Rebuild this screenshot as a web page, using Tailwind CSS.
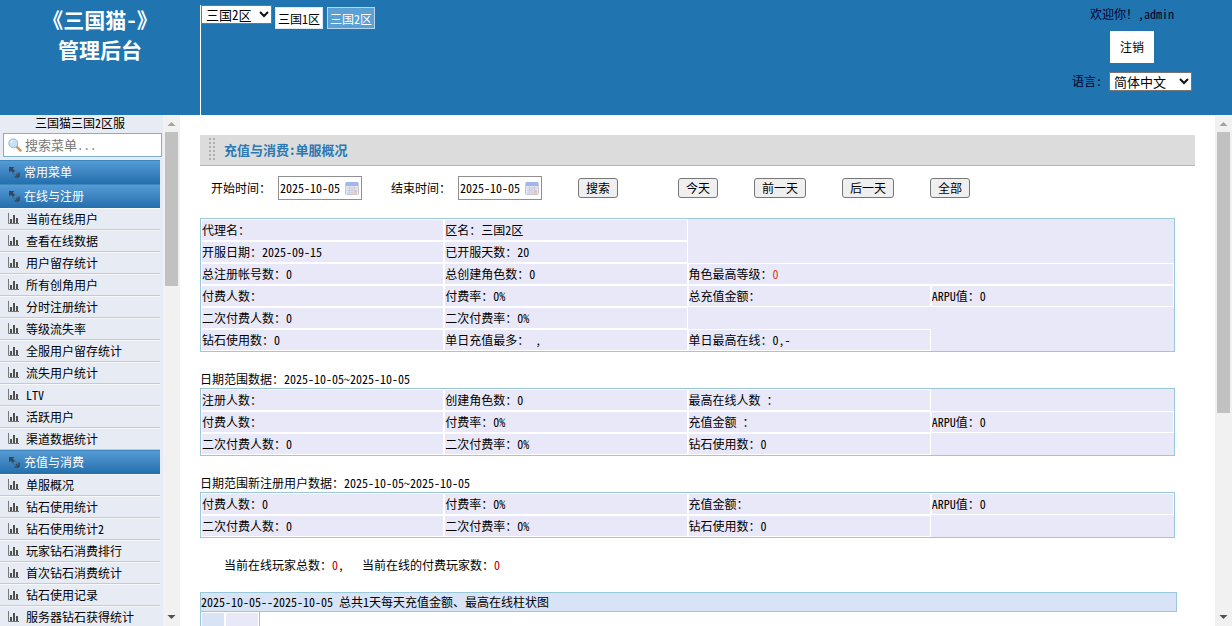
<!DOCTYPE html>
<html lang="zh-CN">
<head>
<meta charset="utf-8">
<title>《三国猫-》管理后台</title>
<script src="https://cdn.jsdelivr.net/npm/@tailwindcss/browser@4"></script>
</head>
<body class="flex h-screen flex-col overflow-hidden bg-white font-['Noto_Sans_CJK_SC',sans-serif] text-[12px] leading-[20px] text-black [font-feature-settings:'hwid']">

<svg class="hidden" aria-hidden="true">
  <symbol id="i-expand" viewBox="0 0 12 12"><path d="M1 1h5.500L4.800 2.700 7 4.900 4.900 7 2.700 4.800 1 6.500z" fill="#34495c"/><path d="M11 11V6.500M11 11H6.500M8 8l2.500 2.500" stroke="#34495c" stroke-width="1.600" fill="none"/><path d="M7 4.500l3 3M4.500 7l3 3" stroke="#34495c" stroke-width=".8" stroke-dasharray="1 1"/></symbol>
  <symbol id="i-bars" viewBox="0 0 11 11"><path d="M.5 0v10.500H11" fill="none" stroke="#777"/><path d="M2 6h2v4H2zM5 2h2v8H5zM8 5h2v5H8z" fill="#505050"/></symbol>
  <symbol id="i-cal" viewBox="0 0 14 14"><rect x=".5" y="1.500" width="13" height="12" rx="1" fill="#e4e6f2" stroke="#c3c8dc"/><path d="M1 1h12v4H1z" fill="#a3b6ea"/><path d="M2 7h10M2 9.500h10M2 12h8M4.500 5.500v7M7 5.500v7M9.500 5.500v7" stroke="#c9cce0" stroke-width="1"/><path d="M9 9.500h3v3H9z" fill="#efc4a0"/></symbol>
  <symbol id="i-up" viewBox="0 0 17 17"><path d="M4.500 11l4-4 4 4z" fill="#a3a3a3"/></symbol>
  <symbol id="i-down" viewBox="0 0 17 17"><path d="M4.500 6l4 4 4-4z" fill="#505050"/></symbol>
  <symbol id="i-chev" viewBox="0 0 10 7"><path d="M1 1l4 4 4-4" fill="none" stroke="#111" stroke-width="2"/></symbol>
</svg>

<header class="flex h-[115px] shrink-0 bg-[#2075b0]">
  <h1 class="w-[200px] shrink-0 pt-[4px] text-center text-[21px] leading-[30px] font-bold text-white">《三国猫-》<br>管理后台</h1>
  <div class="mt-[5px] flex flex-1 items-start border-l border-white">
    <div class="grid w-[71px] items-center">
      <select aria-label="区服" class="col-start-1 row-start-1 h-[19px] appearance-none border border-[#767676] bg-white pl-[4px] text-[13px] leading-[17px]"><option>三国2区</option></select>
      <svg class="pointer-events-none col-start-1 row-start-1 mr-[3px] h-[7px] w-[10px] justify-self-end"><use href="#i-chev"/></svg>
    </div>
    <nav class="mt-[2px] ml-[3px] flex gap-1">
      <a href="#s1" class="h-[22px] w-12 border border-[#d9e8f4] bg-white text-center leading-[22px]">三国1区</a>
      <a href="#s2" class="h-[22px] w-12 border border-[#b5d6ee] bg-[#5ba0d3] text-center leading-[22px] text-white">三国2区</a>
    </nav>
  </div>
  <div class="flex w-[200px] shrink-0 flex-col items-center pt-[4px]">
    <p class="text-[#00002a]">欢迎你！,admin</p>
    <button class="mt-[7px] h-8 w-[44px] bg-white">注销</button>
    <div class="mt-[8px] flex w-[120px] items-center justify-between"><label for="lang" class="text-[#00002a]">语言:</label>
      <div class="grid w-[83px] items-center">
        <select id="lang" class="col-start-1 row-start-1 h-[19px] appearance-none border border-[#767676] bg-white pl-[4px] text-[13px] leading-[17px]"><option>简体中文</option></select>
        <svg class="pointer-events-none col-start-1 row-start-1 mr-[3px] h-[7px] w-[10px] justify-self-end"><use href="#i-chev"/></svg>
      </div></div>
  </div>
</header>

<div class="flex min-h-0 flex-1">
  <aside class="flex w-[180px] shrink-0 bg-[#e7ecf4]">
    <div class="flex min-w-0 flex-1 flex-col overflow-hidden">
      <p class="h-[18px] w-[160px] shrink-0 text-center leading-[16px]">三国猫三国2区服</p>
      <label class="ml-[3px] flex h-[24px] w-[159px] shrink-0 items-center gap-[3px] border border-[#7eb0d2] bg-white pl-[4px]">
        <svg class="size-[14px] shrink-0" viewBox="0 0 14 14"><path d="M8.500 8.500l4 4" stroke="#d29a62" stroke-width="2.500" stroke-linecap="round"/><circle cx="5.300" cy="5.300" r="4.500" fill="#c5e1f6" stroke="#9ab9d6"/><path d="M2.800 5a2.500 2.500 0 0 1 2.500-2.300" stroke="#fff" fill="none"/></svg>
        <input aria-label="搜索菜单" placeholder="搜索菜单..." class="w-full min-w-0 text-[13px] outline-none placeholder:text-[#777]">
      </label>
      <nav id="menu" class="mt-[3px] w-[160px]"></nav>
    </div>
    <div class="flex w-[17px] shrink-0 flex-col items-center bg-[#f1f1f1]">
      <svg class="size-[17px]"><use href="#i-up"/></svg>
      <div class="h-[154px] w-[13px] bg-[#c1c1c1]"></div>
      <svg class="mt-auto size-[17px]"><use href="#i-down"/></svg>
    </div>
  </aside>

  <main class="min-w-0 flex-1 overflow-hidden px-5 pt-5">
    <div class="flex h-[31px] items-center border-b border-[#b4b4b4] bg-[#dcdcdc] pl-[9px]">
      <svg class="h-[24px] w-[6px]" viewBox="0 0 6 24"><path d="M1 0v24M5 0v24" stroke="#b0b0b0" stroke-width="2" stroke-dasharray="2 2"/></svg>
      <h2 class="ml-[9px] text-[13px] font-bold text-[#2b78b4]">充值与消费:单服概况</h2>
    </div>

    <form class="flex h-[44px] items-center pl-[11px]">
      <label for="d1" class="w-[67px]">开始时间：</label>
      <div class="flex h-6 w-[84px] items-center border border-[#8f8f8f] pr-[2px] pl-px"><input id="d1" value="2025-10-05" class="w-full min-w-0 outline-none"><svg class="size-[14px] shrink-0"><use href="#i-cal"/></svg></div>
      <label for="d2" class="ml-[29px] w-[67px]">结束时间：</label>
      <div class="flex h-6 w-[84px] items-center border border-[#8f8f8f] pr-[2px] pl-px"><input id="d2" value="2025-10-05" class="w-full min-w-0 outline-none"><svg class="size-[14px] shrink-0"><use href="#i-cal"/></svg></div>
      <button type="button" class="ml-9 h-5 w-10 rounded-[3px] border border-[#767676] bg-[#efefef] leading-[18px]">搜索</button>
      <div class="ml-[60px] flex gap-9">
        <button type="button" class="h-5 w-10 rounded-[3px] border border-[#767676] bg-[#efefef] leading-[18px]">今天</button>
        <button type="button" class="h-5 w-[52px] rounded-[3px] border border-[#767676] bg-[#efefef] leading-[18px]">前一天</button>
        <button type="button" class="h-5 w-[52px] rounded-[3px] border border-[#767676] bg-[#efefef] leading-[18px]">后一天</button>
        <button type="button" class="h-5 w-10 rounded-[3px] border border-[#767676] bg-[#efefef] leading-[18px]">全部</button>
      </div>
    </form>

    <div class="mt-[8px] mr-5 border border-[#99c8d8]">
      <table class="w-full table-fixed border-separate border-spacing-0 bg-[#e8e8f8] [&_td]:h-[22px] [&_td]:p-0 [&_td:not(:empty)]:border [&_td:not(:empty)]:border-white">
        <tr><td>代理名：</td><td>区名：三国2区</td><td colspan="2" rowspan="2"></td></tr>
        <tr><td>开服日期：2025-09-15</td><td>已开服天数：20</td></tr>
        <tr><td>总注册帐号数：0</td><td>总创建角色数：0</td><td colspan="2">角色最高等级：<span class="text-[#e03c1e]">0</span></td></tr>
        <tr><td>付费人数：</td><td>付费率：0%</td><td>总充值金额：</td><td>ARPU值：0</td></tr>
        <tr><td>二次付费人数：0</td><td>二次付费率：0%</td><td></td><td></td></tr>
        <tr><td>钻石使用数：0</td><td>单日充值最多：&nbsp;,</td><td>单日最高在线：0,-</td><td></td></tr>
      </table>
    </div>

    <h3 class="mt-[17px] h-[19px]">日期范围数据：2025-10-05~2025-10-05</h3>
    <div class="mr-5 border border-[#99c8d8]">
      <table class="w-full table-fixed border-separate border-spacing-0 bg-[#e8e8f8] [&_td]:h-[22px] [&_td]:p-0 [&_td:not(:empty)]:border [&_td:not(:empty)]:border-white">
        <tr><td>注册人数：</td><td>创建角色数：0</td><td>最高在线人数&nbsp;：</td><td></td></tr>
        <tr><td>付费人数：</td><td>付费率：0%</td><td>充值金额&nbsp;：</td><td>ARPU值：0</td></tr>
        <tr><td>二次付费人数：0</td><td>二次付费率：0%</td><td>钻石使用数：0</td><td></td></tr>
      </table>
    </div>

    <h3 class="mt-[17px] h-[19px]">日期范围新注册用户数据：2025-10-05~2025-10-05</h3>
    <div class="mr-5 border border-[#99c8d8]">
      <table class="w-full table-fixed border-separate border-spacing-0 bg-[#e8e8f8] [&_td]:h-[22px] [&_td]:p-0 [&_td:not(:empty)]:border [&_td:not(:empty)]:border-white">
        <tr><td>付费人数：0</td><td>付费率：0%</td><td>充值金额：</td><td>ARPU值：0</td></tr>
        <tr><td>二次付费人数：0</td><td>二次付费率：0%</td><td>钻石使用数：0</td><td></td></tr>
      </table>
    </div>

    <p class="mt-[17px] flex gap-[18px] pl-6"><span>当前在线玩家总数：<span class="text-[#c00000]">0</span>,</span><span>当前在线的付费玩家数：<span class="text-[#c00000]">0</span></span></p>

    <h3 class="mt-[17px] mr-[18px] h-5 border border-[#99c8d8] bg-[#d8e4f6] leading-[18px]">2025-10-05--2025-10-05 总共1天每天充值金额、最高在线柱状图</h3>
    <div class="flex h-[60px] w-[60px] gap-[2px] border border-t-0 border-[#99c8d8] p-px">
      <div class="w-[22px] bg-[#d8e4f6]"></div>
      <div class="flex-1 bg-[#e8e8f8]"></div>
    </div>
  </main>

  <div class="flex w-[17px] shrink-0 flex-col items-center bg-[#f1f1f1]">
    <svg class="size-[17px]"><use href="#i-up"/></svg>
    <div class="h-[281px] w-[13px] bg-[#c1c1c1]"></div>
    <svg class="mt-auto size-[17px]"><use href="#i-down"/></svg>
  </div>
</div>

<script>
const groups = [
  ['常用菜单', []],
  ['在线与注册', ['当前在线用户', '查看在线数据', '用户留存统计', '所有创角用户', '分时注册统计', '等级流失率', '全服用户留存统计', '流失用户统计', 'LTV', '活跃用户', '渠道数据统计']],
  ['充值与消费', ['单服概况', '钻石使用统计', '钻石使用统计2', '玩家钻石消费排行', '首次钻石消费统计', '钻石使用记录', '服务器钻石获得统计']]
];
document.getElementById('menu').innerHTML = groups.map(([name, items]) =>
  `<button class="flex h-6 w-full items-center gap-[4px] border-t border-b border-t-[#3d86be] border-b-[#2570ae] bg-linear-to-b from-[#559cd6] to-[#2570ae] pl-2 text-white"><svg class="size-3"><use href="#i-expand"/></svg>${name}</button>` +
  items.map(t => `<a href="#" class="flex h-[22px] items-center gap-[7px] border-t border-b border-t-[#f6f8fb] border-b-[#c3cad6] pl-2"><svg class="mb-px size-[11px]"><use href="#i-bars"/></svg>${t}</a>`).join('')
).join('');
</script>
</body>
</html>
